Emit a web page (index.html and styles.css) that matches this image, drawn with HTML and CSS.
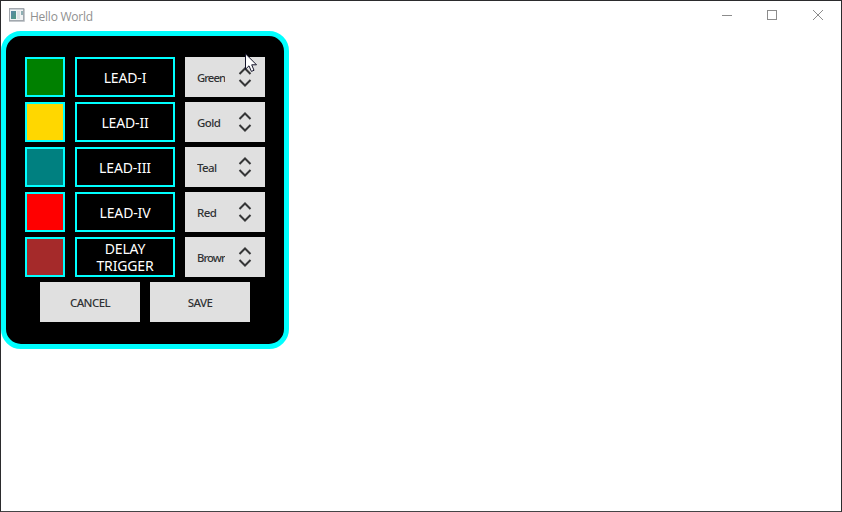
FILE: index.html
```html
<!DOCTYPE html>
<html lang="en">
<head>
<meta charset="utf-8">
<title>Hello World</title>
<link rel="stylesheet" href="styles.css">
</head>
<body>
<div class="window">
  <header class="titlebar">
    <svg class="app-icon" width="16" height="14" viewBox="0 0 16 14">
      <defs><linearGradient id="g" x1="0" y1="0" x2="1" y2="1"><stop offset="0" stop-color="#5a86a8"/><stop offset="1" stop-color="#4f9a80"/></linearGradient></defs>
      <rect x="0.5" y="0.5" width="14" height="12" fill="#f2f3f4" stroke="#a2a8ae"/>
      <path d="M1 1.5h13" stroke="#c9d0d6"/>
      <rect x="2" y="3" width="5" height="8" fill="url(#g)"/>
      <rect x="8" y="3" width="3" height="8" fill="#dfe3e6"/>
      <rect x="12" y="3" width="2" height="4" fill="#8fb0b4"/>
      <path d="M0 13.5h15.5v-13" fill="none" stroke="#c4c8cc"/>
    </svg>
    <h1 class="title">Hello World</h1>
    <svg class="controls" width="138" height="30" viewBox="0 0 138 30" fill="none" stroke="#8c8c8c">
      <path d="M18 14.5h10"/>
      <rect x="63.5" y="9.5" width="9" height="9"/>
      <path d="M109 9l10 10M119 9l-10 10"/>
    </svg>
  </header>
  <main class="panel">
    <div class="row"><span class="swatch green"></span><span class="lead">LEAD-I</span><div class="combo"><span class="value tight">Green</span><svg class="arrows" width="14" height="22" viewBox="0 0 14 22"><path d="M1.5 8L7 2.5L12.5 8M1.5 14L7 19.5L12.5 14"/></svg></div></div>
    <div class="row"><span class="swatch gold"></span><span class="lead">LEAD-II</span><div class="combo"><span class="value">Gold</span><svg class="arrows" width="14" height="22" viewBox="0 0 14 22"><path d="M1.5 8L7 2.5L12.5 8M1.5 14L7 19.5L12.5 14"/></svg></div></div>
    <div class="row"><span class="swatch teal"></span><span class="lead">LEAD-III</span><div class="combo"><span class="value">Teal</span><svg class="arrows" width="14" height="22" viewBox="0 0 14 22"><path d="M1.5 8L7 2.5L12.5 8M1.5 14L7 19.5L12.5 14"/></svg></div></div>
    <div class="row"><span class="swatch red"></span><span class="lead">LEAD-IV</span><div class="combo"><span class="value">Red</span><svg class="arrows" width="14" height="22" viewBox="0 0 14 22"><path d="M1.5 8L7 2.5L12.5 8M1.5 14L7 19.5L12.5 14"/></svg></div></div>
    <div class="row"><span class="swatch brown"></span><span class="lead">DELAY<br>TRIGGER</span><div class="combo"><span class="value tight">Brown</span><svg class="arrows" width="14" height="22" viewBox="0 0 14 22"><path d="M1.5 8L7 2.5L12.5 8M1.5 14L7 19.5L12.5 14"/></svg></div></div>
    <div class="actions"><button class="button">CANCEL</button><button class="button">SAVE</button></div>
  </main>
  <svg class="cursor" width="13" height="20" viewBox="0 0 13 20">
    <path d="M.5 .8V16.2L4 12.8L6.4 18.4L9 17.3L6.7 11.8H11.5Z" fill="#fff" stroke="#14142a"/>
  </svg>
</div>
</body>
</html>
```
FILE: styles.css
```css
* { box-sizing: border-box; }

body {
  margin: 0;
  font-family: "Noto Sans", sans-serif;
}

.window {
  position: relative;
  width: 842px;
  height: 512px;
  overflow: hidden;
  background: #fff;
  border: 1px solid #2b2b2d;
  border-bottom-color: #444446;
}

.titlebar {
  display: flex;
  align-items: center;
  height: 30px;
  padding: 0 0 0 8px;
}

.app-icon { flex: none; margin-top: -2px; }

.title {
  flex: 1;
  margin: 1px 0 0 5px;
  font: 12px/16px "Open Sans", sans-serif;
  letter-spacing: -0.25px;
  color: #909090;
}

.controls { flex: none; margin-right: -1px; }

.panel {
  display: flex;
  flex-direction: column;
  gap: 5px;
  width: 288px;
  height: 318px;
  padding: 21px 19px;
  background: #000;
  border: 5px solid #0ff;
  border-radius: 20px;
}

.row {
  display: flex;
  gap: 10px;
  height: 40px;
}

.swatch {
  width: 40px;
  border: 2px solid #0ff;
}

.green { background: #008000; }
.gold { background: #ffd700; }
.teal { background: #008080; }
.red { background: #f00; }
.brown { background: #a52a2a; }

.lead {
  display: flex;
  align-items: center;
  justify-content: center;
  width: 100px;
  border: 2px solid #0ff;
  color: #fff;
  font-size: 14px;
  line-height: 17px;
  letter-spacing: -0.15px;
  text-align: center;
}

.combo {
  display: flex;
  align-items: center;
  justify-content: space-between;
  width: 80px;
  padding: 0 13px 0 12px;
  background: #e0e0e0;
}

.value {
  width: 28px;
  padding-top: 1px;
  overflow: hidden;
  white-space: nowrap;
  font-size: 11.5px;
  font-weight: 500;
  letter-spacing: -0.6px;
  line-height: 16px;
  color: #303234;
}

.value.tight {
  font-size: 11.3px;
  letter-spacing: -0.95px;
}

.arrows {
  fill: none;
  stroke: #353637;
  stroke-width: 2;
}

.actions {
  display: flex;
  gap: 10px;
  padding-left: 15px;
}

.button {
  width: 100px;
  height: 40px;
  padding: 1px 0 0;
  border: 0;
  background: #e0e0e0;
  font: 500 11.5px/16px "Noto Sans", sans-serif;
  letter-spacing: -0.6px;
  color: #303234;
}

.cursor {
  position: absolute;
  left: 244px;
  top: 52px;
}
```
